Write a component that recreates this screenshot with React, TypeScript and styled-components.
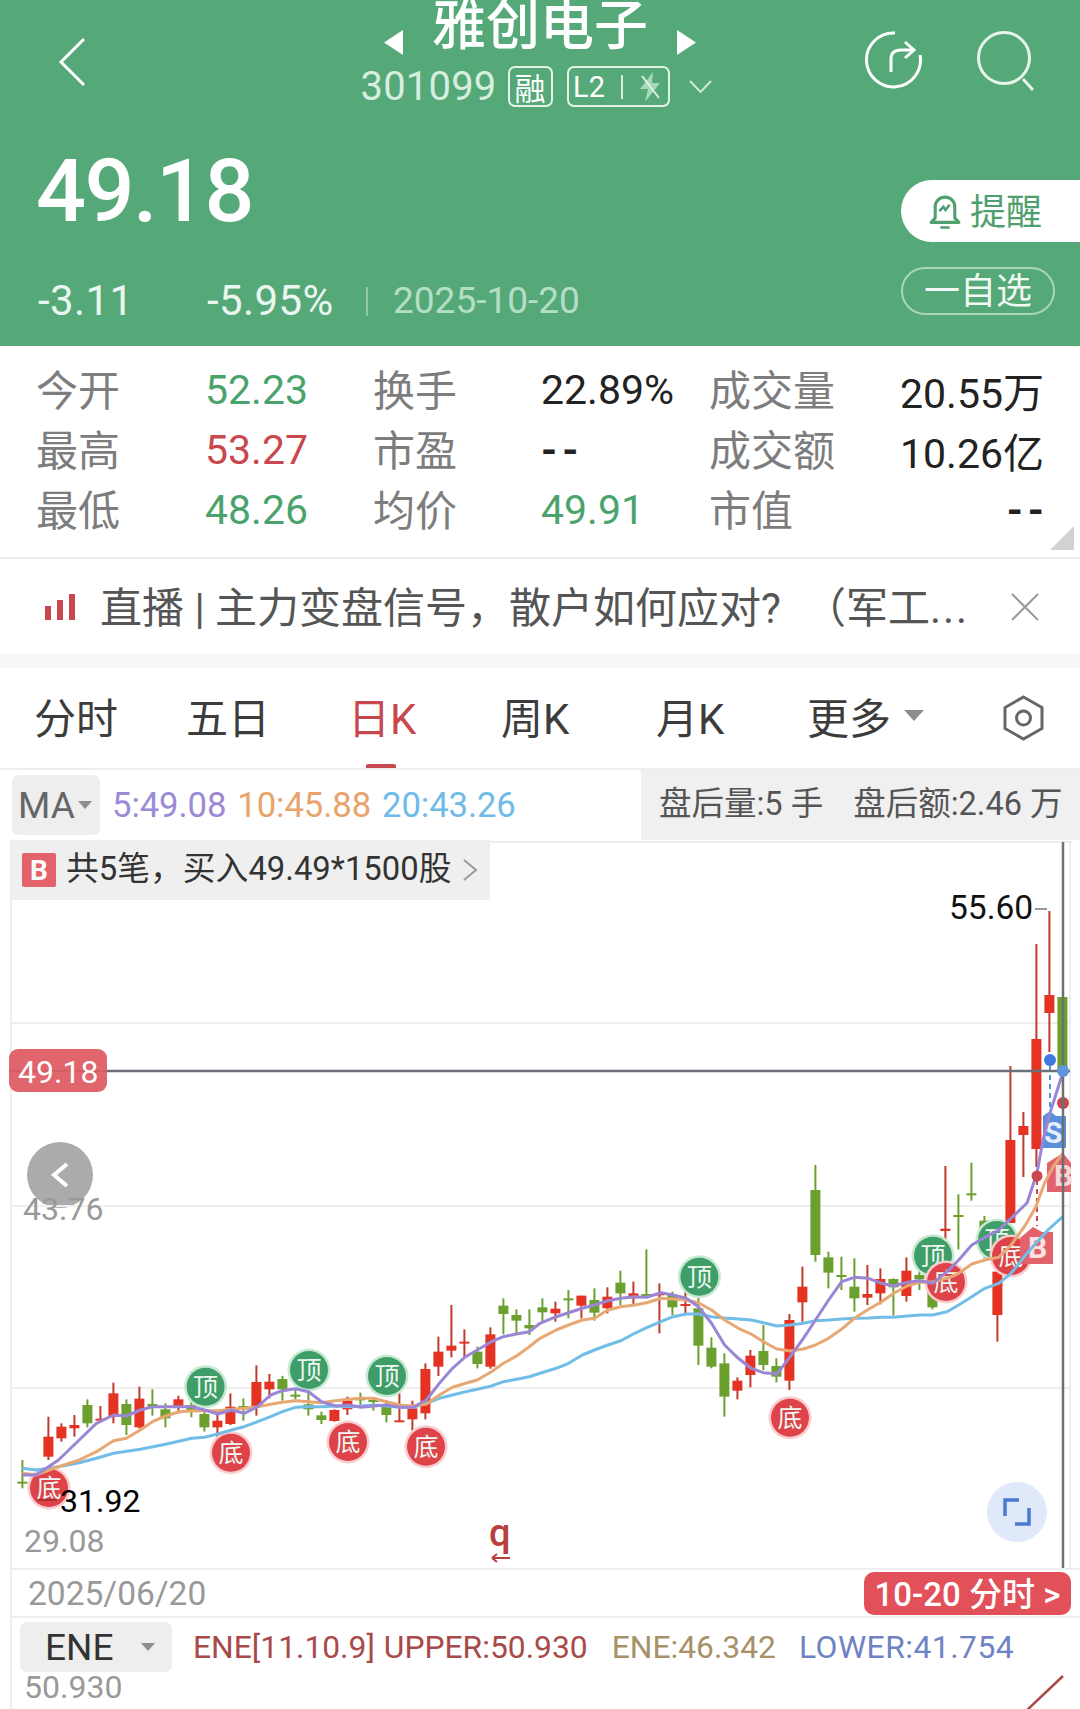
import { Fragment } from "react";
import styled, { createGlobalStyle } from "styled-components";

const GlobalStyle = createGlobalStyle`
  html, body {
    margin: 0;
    padding: 0;
    background: #fff;
  }
  body {
    font-family: Roboto, "Noto Sans CJK SC", sans-serif;
  }
`;

const Page = styled.div`
  width: 1080px;
  height: 1709px;
  overflow: hidden;
  background: #fff;
`;

// ---------- header ----------
const Header = styled.header`
  height: 346px;
  background: #55a877;
  color: #fff;
`;

const TopBar = styled.div`
  height: 113px;
  display: grid;
  grid-template-columns: 1fr auto 1fr;
`;

const BackLink = styled.div`
  padding: 37px 0 0 58px;
`;

const TitleBlock = styled.div`
  display: flex;
  flex-direction: column;
  align-items: center;
  padding-top: 1px;
`;

const NameRow = styled.div`
  display: flex;
  align-items: center;
  gap: 29px;
  height: 52px;
`;

const StockName = styled.div`
  font-size: 54px;
  line-height: 52px;
  font-weight: 500;
`;

const Caret = styled.svg`
  margin-top: 30px;
`;

const CodeRow = styled.div`
  display: flex;
  align-items: center;
  height: 41px;
  margin-top: 13px;
  padding-right: 8px;
`;

const Code = styled.div`
  font-size: 40px;
  line-height: 41px;
  letter-spacing: 0.2px;
  color: #d6eedf;
  margin-right: 11px;
`;

const Tag = styled.div<{ $width: number }>`
  box-sizing: border-box;
  width: ${({ $width }) => $width}px;
  height: 41px;
  border: 2px solid #e3f3e9;
  border-radius: 7px;
  display: flex;
  align-items: center;
  justify-content: center;
  font-size: 31px;
  margin-right: 14px;
`;

const L2Text = styled.span`
  font-size: 29px;
  margin-right: 16px;
`;

const TagDivider = styled.span`
  width: 2px;
  height: 24px;
  background: #d7eee0;
  margin-right: 14px;
`;

const CodeChevron = styled.svg`
  margin-left: 5px;
`;

const RightIcons = styled.div`
  display: flex;
  justify-content: flex-end;
  gap: 55px;
  padding: 31px 45px 0 0;
`;

const Quote = styled.div`
  display: flex;
  justify-content: space-between;
`;

const QuoteLeft = styled.div`
  padding-left: 38px;
`;

const BigPrice = styled.div`
  margin: 45px 0 0 -2px;
  font-size: 88px;
  line-height: 66px;
  letter-spacing: -1.5px;
  font-weight: 500;
`;

const ChangeRow = styled.div`
  display: flex;
  align-items: center;
  margin-top: 62px;
  height: 30px;
  font-size: 42px;
  line-height: 30px;
  color: #eaf6ef;
`;

const ChangeValue = styled.span<{ $width: number }>`
  width: ${({ $width }) => $width}px;
  letter-spacing: 0.4px;
`;

const ChangeDivider = styled.span`
  width: 2px;
  height: 29px;
  background: #8ec9a6;
  margin: 0 25px 0 0;
`;

const QuoteDate = styled.span`
  font-size: 37px;
  color: #b5dec6;
`;

const QuoteRight = styled.div`
  width: 179px;
  padding-top: 67px;
  display: flex;
  flex-direction: column;
  gap: 25px;
`;

const RemindButton = styled.div`
  height: 62px;
  background: #fff;
  border-radius: 31px 0 0 31px;
  display: flex;
  align-items: center;
  padding-left: 27px;
  gap: 8px;
  font-size: 36px;
  color: #4f9f6f;
`;

const RemindLabel = styled.span`
  padding-bottom: 4px;
`;

const WatchButton = styled.div`
  box-sizing: border-box;
  width: 154px;
  height: 48px;
  border: 2px solid #a9d5ba;
  border-radius: 24px;
  padding-bottom: 6px;
  display: flex;
  align-items: center;
  justify-content: center;
  font-size: 36px;
  color: #f1f9f4;
`;

// ---------- stats ----------
const Stats = styled.section`
  position: relative;
  box-sizing: border-box;
  height: 213px;
  padding: 14px 36px 0 36px;
  border-bottom: 2px solid #ededed;
  display: grid;
  grid-template-columns: 169px 168px 168px 168px 121px 1fr;
  grid-auto-rows: 60px;
  align-items: center;
  font-size: 41px;
`;

const StatLabel = styled.div`
  color: #7d7d7d;
  font-size: 42px;
  padding-bottom: 5px;
  white-space: nowrap;
`;

const StatValue = styled.div<{ $tone?: string; $right?: boolean }>`
  color: ${({ $tone }) => $tone ?? "#222"};
  text-align: ${({ $right }) => ($right ? "right" : "left")};
  white-space: nowrap;
`;

const StatDash = styled.span`
  font-weight: 700;
  letter-spacing: 5px;
  margin-right: -5px;
`;

const CornerMark = styled.div`
  position: absolute;
  right: 6px;
  bottom: 7px;
  width: 0;
  height: 0;
  border-left: 24px solid transparent;
  border-bottom: 24px solid #d2d2d2;
`;

// ---------- news ----------
const News = styled.div`
  height: 95px;
  display: flex;
  align-items: center;
  padding: 0 41px 0 45px;
  gap: 24px;
`;

const NewsText = styled.div`
  flex: 1;
  font-size: 42px;
  padding-bottom: 4px;
  color: #555;
  white-space: nowrap;
`;

const NewsTail = styled.span`
  margin-left: 23px;
`;

const NewsDots = styled.span`
  letter-spacing: 2px;
`;

const Band = styled.div`
  height: 14px;
  background: #f7f7f7;
`;

// ---------- tabs ----------
const Tabs = styled.nav`
  box-sizing: border-box;
  height: 102px;
  padding-left: 34px;
  border-bottom: 2px solid #eee;
  display: grid;
  grid-template-columns: 152px 162px 153px 155px 151px 195px 1fr;
  align-items: center;
`;

const Tab = styled.div<{ $active?: boolean }>`
  position: relative;
  box-sizing: border-box;
  height: 100px;
  padding-bottom: 6px;
  display: flex;
  align-items: center;
  gap: 13px;
  font-size: 42px;
  color: ${({ $active }) => ($active ? "#c9474e" : "#3c3c3c")};

  ${({ $active }) =>
    $active &&
    `&::after {
      content: "";
      position: absolute;
      left: 18px;
      bottom: 0;
      width: 30px;
      height: 4px;
      background: #c9474e;
      border-radius: 2px 2px 0 0;
    }`}
`;

const DownTriangle = styled.span<{ $size: number; $tone: string }>`
  display: inline-block;
  width: 0;
  height: 0;
  border-left: ${({ $size }) => $size}px solid transparent;
  border-right: ${({ $size }) => $size}px solid transparent;
  border-top: ${({ $size }) => $size * 1.15}px solid ${({ $tone }) => $tone};
`;

const SettingsIcon = styled.svg`
  margin-top: 6px;
`;

// ---------- MA row ----------
const MaRow = styled.div`
  height: 70px;
  display: flex;
  align-items: center;
  padding-left: 12px;
`;

const SelectBox = styled.div<{ $width: number; $height: number }>`
  box-sizing: border-box;
  width: ${({ $width }) => $width}px;
  height: ${({ $height }) => $height}px;
  background: #eee;
  border-radius: 7px;
  display: flex;
  align-items: center;
`;

const MaName = styled.span`
  font-size: 37px;
  color: #666;
  margin: 0 3px 0 6px;
`;

const MaValues = styled.div`
  display: flex;
  gap: 11px;
  margin-left: 12px;
  font-size: 34.7px;
  letter-spacing: -0.1px;
`;

const MaValue = styled.span<{ $tone: string }>`
  color: ${({ $tone }) => $tone};
`;

const AfterHours = styled.div`
  margin-left: auto;
  box-sizing: border-box;
  width: 439px;
  height: 70px;
  padding: 0 0 9px 18px;
  background: #f0f0f0;
  display: flex;
  align-items: center;
  gap: 30px;
  font-size: 32.5px;
  color: #555;
`;

// ---------- chart ----------
const Chart = styled.section`
  position: relative;
  height: 728px;
`;

const ChartCanvas = styled.svg`
  position: absolute;
  left: 0;
  top: 0;
  display: block;
`;

const TradeBar = styled.div`
  position: absolute;
  left: 10px;
  top: 0;
  box-sizing: border-box;
  width: 480px;
  height: 60px;
  background: #efefef;
  display: flex;
  align-items: center;
  padding-left: 12px;
  font-size: 32.8px;
  color: #333;
`;

const TradeBadge = styled.span`
  width: 34px;
  height: 34px;
  margin-right: 10px;
  background: #e4636a;
  border-radius: 2px;
  color: #fff;
  font-size: 28px;
  font-weight: 700;
  display: flex;
  align-items: center;
  justify-content: center;
`;

const TradeText = styled.span`
  padding-bottom: 9px;
  margin-right: 11px;
`;

const BackBubble = styled.div`
  position: absolute;
  left: 27px;
  top: 302px;
  width: 66px;
  height: 66px;
  border-radius: 50%;
  background: #ababab;
  display: flex;
  align-items: center;
  justify-content: center;
`;

const RestoreBubble = styled.div`
  position: absolute;
  left: 987px;
  top: 642px;
  width: 60px;
  height: 60px;
  border-radius: 50%;
  background: #dfe9f9;
  display: flex;
  align-items: center;
  justify-content: center;
`;

const ChartText = styled.text<{ $size: number; $tone: string; $weight?: number }>`
  font-family: Roboto, "Noto Sans CJK SC", sans-serif;
  font-size: ${({ $size }) => $size}px;
  fill: ${({ $tone }) => $tone};
  font-weight: ${({ $weight }) => $weight ?? 400};
`;

// ---------- bottom ----------
const DateRow = styled.div`
  box-sizing: border-box;
  height: 50px;
  margin-left: 10px;
  padding: 0 9px 0 16px;
  border-top: 2px solid #eee;
  border-left: 2px solid #eee;
  border-bottom: 2px solid #eee;
  display: flex;
  align-items: center;
  justify-content: space-between;
  font-size: 33.5px;
  color: #999;
`;

const MinutePill = styled.div`
  box-sizing: border-box;
  width: 207px;
  height: 43px;
  padding-bottom: 3px;
  border-radius: 10px;
  background: #e25059;
  color: #fff;
  display: flex;
  align-items: center;
  justify-content: center;
  font-size: 33px;
  font-weight: 500;
  white-space: pre;
`;

const IndicatorRow = styled.div`
  height: 91px;
  margin-left: 10px;
  padding: 4px 0 0 8px;
  border-left: 2px solid #eee;
  position: relative;
`;

const IndicatorTop = styled.div`
  display: flex;
  align-items: center;
`;

const EneName = styled.span`
  font-size: 37px;
  color: #333;
  margin: 0 28px 0 25px;
`;

const EneValues = styled.div`
  display: flex;
  margin-left: 21px;
  font-size: 31.8px;
  white-space: nowrap;
`;

const EneValue = styled.span<{ $tone: string; $gap: number; $spacing?: number }>`
  color: ${({ $tone }) => $tone};
  margin-right: ${({ $gap }) => $gap}px;
  letter-spacing: ${({ $spacing }) => $spacing ?? 0}px;
`;

const AxisValue = styled.div`
  margin: 2px 0 0 4px;
  font-size: 32px;
  line-height: 27px;
  color: #999;
`;

const CornerLine = styled.svg`
  position: absolute;
  right: 16px;
  bottom: 0;
`;

// ---------- chart data ----------
type Candle = [number, number, number, number, "r" | "g"];

// high, body top, body bottom, low
const candles: Candle[] = [
  [930, 995, 997, 1015, "g"], [970, 985, 1040, 1055, "r"], [800, 860, 920, 930, "r"], [820, 830, 865, 875, "r"],
  [795, 825, 835, 860, "r"], [748, 765, 820, 832, "g"], [768, 806, 810, 815, "r"], [698, 730, 800, 820, "r"],
  [748, 762, 825, 855, "g"], [710, 746, 832, 835, "r"], [718, 762, 765, 797, "g"], [760, 778, 805, 832, "g"],
  [737, 748, 770, 790, "r"], [755, 765, 780, 802, "g"], [785, 792, 832, 845, "g"], [780, 812, 832, 865, "r"],
  [730, 770, 822, 825, "r"], [745, 768, 778, 812, "g"], [646, 696, 770, 797, "r"], [672, 695, 718, 745, "r"],
  [678, 687, 718, 752, "g"], [715, 734, 737, 748, "g"], [720, 763, 778, 797, "g"], [785, 796, 810, 822, "g"],
  [778, 780, 813, 815, "r"], [740, 752, 778, 795, "r"], [728, 745, 750, 770, "g"], [742, 750, 753, 782, "g"],
  [750, 770, 795, 817, "g"], [730, 811, 814, 815, "r"], [752, 775, 808, 842, "r"], [640, 657, 790, 808, "r"],
  [560, 605, 650, 678, "r"], [465, 587, 602, 622, "r"], [538, 575, 579, 622, "r"], [590, 605, 642, 655, "g"],
  [532, 553, 650, 656, "r"], [445, 467, 492, 553, "g"], [478, 495, 512, 552, "g"], [478, 525, 535, 555, "g"],
  [445, 472, 487, 515, "g"], [455, 476, 490, 515, "r"], [420, 445, 448, 505, "g"], [437, 437, 467, 505, "r"],
  [415, 450, 488, 512, "g"], [412, 440, 475, 490, "r"], [362, 398, 430, 465, "g"], [395, 430, 445, 468, "r"],
  [298, 432, 437, 440, "g"], [400, 430, 432, 550, "r"], [425, 435, 472, 495, "g"], [420, 462, 466, 490, "r"],
  [440, 475, 587, 645, "g"], [562, 593, 650, 655, "g"], [610, 640, 740, 800, "g"], [682, 692, 722, 748, "r"],
  [600, 617, 675, 712, "r"], [525, 603, 645, 660, "g"], [625, 648, 680, 697, "g"], [492, 510, 692, 720, "r"],
  [350, 410, 457, 515, "r"], [45, 120, 315, 335, "g"], [305, 322, 368, 415, "g"], [320, 375, 381, 420, "g"],
  [325, 410, 445, 485, "g"], [345, 432, 443, 465, "r"], [355, 387, 430, 463, "r"], [385, 387, 412, 497, "g"],
  [322, 362, 438, 455, "r"], [330, 375, 388, 420, "g"], [390, 425, 472, 478, "g"], [48, 236, 243, 340, "r"],
  [133, 195, 200, 298, "g"], [38, 130, 133, 152, "g"], [198, 212, 300, 325, "g"], [340, 365, 495, 575, "r"],
  [-252, -30, 219, 219, "r"], [-114, -72, -45, 81, "r"], [-618, -333, -3, 51, "r"], [-717, -465, -411, -294, "r"],
  [-459, -459, -240, -240, "g"],
];

const toY = (v: number) => 1150 + v / 3;
const candleX = (i: number) => 22.4 + 13 * i;

// measured as x,y pairs: left half of the chart, then right half
const toLine = (left: number[], right: number[], tail = "") => {
  const pts: string[] = [];
  for (let i = 0; i < left.length; i += 2) pts.push(`${(left[i] / 2.904).toFixed(1)},${toY(left[i + 1]).toFixed(1)}`);
  for (let i = 0; i < right.length; i += 2) pts.push(`${(540 + right[i] / 2.904).toFixed(1)},${toY(right[i + 1]).toFixed(1)}`);
  return pts.join(" ") + tail;
};

const ma5 = toLine(
  [65,975,105,975,170,930,230,870,280,820,330,795,367,798,407,780,443,770,481,770,520,770,557,770,594,780,633,792,672,780,709,790,748,770,786,735,820,722,858,716,896,725,934,755,974,768,1012,765,1048,772,1085,768,1122,765,1162,772,1200,772,1238,750,1276,700,1314,655,1352,620,1386,600,1427,575,1462,560,1500,552,1537,545],
  [0,520,47,500,83,488,123,475,158,465,197,452,235,445,275,440,310,442,351,428,386,435,425,445,460,470,498,520,536,585,576,625,613,655,649,668,688,672,727,620,765,565,800,510,838,450,876,395,913,382,954,385,992,400,1027,408,1067,397,1103,392,1140,400,1182,365,1216,330,1254,285,1292,262,1332,240,1368,205],
  " 1027,1203 1037,1173 1043,1140 1050,1113 1063,1072"
);

const ma10 = toLine(
  [65,970,105,975,170,950,230,930,280,905,330,872,367,865,407,840,443,815,481,798,520,785,557,783,594,782,633,782,672,778,709,775,748,770,786,763,820,757,858,752,896,755,934,758,974,752,1012,748,1048,745,1085,745,1122,755,1162,765,1200,768,1238,762,1276,735,1314,712,1352,700,1386,690,1427,665,1462,640,1500,618,1537,590],
  [0,565,47,540,83,525,123,510,158,505,197,480,235,470,275,465,310,458,351,445,386,447,425,450,460,458,498,480,536,510,576,535,613,552,649,575,688,597,727,603,765,597,800,585,838,565,876,537,913,505,954,478,992,455,1027,430,1067,407,1103,397,1140,395,1182,385,1216,370,1254,342,1292,330,1332,322,1368,285,1410,225,1440,170,1465,100,1490,50,1518,10]
);

const ma20 = toLine(
  [65,955,105,960,170,950,230,938,280,925,330,910,407,898,481,883,557,865,594,862,633,852,672,840,709,830,748,815,786,800,820,785,858,772,896,770,934,770,974,768,1012,770,1048,768,1085,765,1122,768,1162,772,1200,772,1238,760,1276,745,1314,735,1352,725,1386,718,1427,708,1462,695,1500,688,1537,680],
  [0,670,47,655,83,640,123,615,158,600,197,585,235,572,275,550,310,533,351,515,386,500,425,492,460,492,498,500,536,504,576,507,613,510,649,518,688,528,727,525,765,520,800,512,838,510,876,507,913,505,954,504,992,502,1027,502,1067,498,1103,495,1140,495,1182,485,1216,465,1254,440,1292,415,1332,400,1368,370,1410,315,1440,280,1475,240,1518,200]
);

const markers: { x: number; y: number; kind: "top" | "bottom" }[] = [
  { x: 205.6, y: 1386.7, kind: "top" },
  { x: 309, y: 1370, kind: "top" },
  { x: 387, y: 1376, kind: "top" },
  { x: 699.4, y: 1276.7, kind: "top" },
  { x: 933, y: 1255.7, kind: "top" },
  { x: 997, y: 1240, kind: "top" },
  { x: 231, y: 1452.7, kind: "bottom" },
  { x: 348, y: 1442, kind: "bottom" },
  { x: 426, y: 1446.7, kind: "bottom" },
  { x: 49, y: 1488, kind: "bottom" },
  { x: 790, y: 1417.7, kind: "bottom" },
  { x: 946, y: 1282, kind: "bottom" },
  { x: 1011, y: 1256, kind: "bottom" },
];

const CandleChart = () => (
  <ChartCanvas width={1080} height={728} viewBox="0 840 1080 728">
    <line x1={11} y1={840} x2={11} y2={1568} stroke="#eee" strokeWidth={2} />
    <line x1={12} y1={842} x2={1072} y2={842} stroke="#eee" strokeWidth={2} />
    <line x1={1070} y1={842} x2={1070} y2={1568} stroke="#eee" strokeWidth={2} />
    {[1023, 1206, 1388].map((y) => (
      <line key={y} x1={12} y1={y} x2={1070} y2={y} stroke="#eee" strokeWidth={2} />
    ))}

    {candles.map(([hi, top, bot, lo, c], i) => {
      const x = candleX(i);
      const body = c === "r" ? "#e53323" : "#6ba02f";
      const wick = c === "r" ? "#c0392b" : "#6ba02f";
      const h = Math.max(toY(bot) - toY(top), 2);
      return (
        <g key={i}>
          <line x1={x} y1={toY(hi)} x2={x} y2={toY(lo)} stroke={wick} strokeWidth={2} />
          <rect x={x - 5} y={toY(top)} width={10} height={h} fill={body} />
        </g>
      );
    })}

    {markers.map((m) => (
      <g key={`${m.x}-${m.y}`}>
        <circle cx={m.x} cy={m.y} r={21.5} fill={m.kind === "top" ? "#c6e9d2" : "#f9cdcf"} />
        <circle cx={m.x} cy={m.y} r={19} fill={m.kind === "top" ? "#3f9e68" : "#dd4349"} />
        <ChartText x={m.x} y={m.y + 9} textAnchor="middle" $size={25} $tone="#eef8f2">
          {m.kind === "top" ? "顶" : "底"}
        </ChartText>
      </g>
    ))}

    <polygon points="1047,1163 1063,1153 1071,1163 1071,1192 1047,1192" fill="#e2636b" />
    <ChartText x={1054} y={1186} $size={30} $weight={700} $tone="#f7d6d8">B</ChartText>
    <polygon points="1020,1238 1033,1227 1042,1232 1053,1232 1053,1264 1020,1264" fill="#e2636b" />
    <ChartText x={1028} y={1258} $size={30} $weight={700} $tone="#fbe3e4">B</ChartText>
    <polygon points="1043,1116 1050,1111 1056,1116 1066,1116 1066,1148 1043,1148" fill="#5b8fdc" />
    <ChartText x={1044} y={1143} $size={30} $weight={700} $tone="#e6eefb">S</ChartText>

    <line x1={1050} y1={1066} x2={1050} y2={1112} stroke="#5b8fdc" strokeWidth={2} strokeDasharray="5 4" />
    <line x1={1037} y1={1180} x2={1037} y2={1226} stroke="#c9474e" strokeWidth={2} strokeDasharray="5 4" />
    <line x1={1063} y1={1108} x2={1063} y2={1152} stroke="#c9474e" strokeWidth={2} strokeDasharray="5 4" />

    <polyline points={ma20} fill="none" stroke="#72bde8" strokeWidth={3} strokeLinejoin="round" />
    <polyline points={ma10} fill="none" stroke="#e8a873" strokeWidth={3} strokeLinejoin="round" />
    <polyline points={ma5} fill="none" stroke="#9b86d6" strokeWidth={3} strokeLinejoin="round" />

    <circle cx={1050} cy={1060} r={6} fill="#3f78e0" />
    <circle cx={1063} cy={1103} r={6} fill="#c9474e" />
    <circle cx={1037} cy={1176} r={5.5} fill="#c9474e" />

    <line x1={1063} y1={842} x2={1063} y2={1568} stroke="#6a7075" strokeWidth={2.5} />
    <line x1={12} y1={1071} x2={1070} y2={1071} stroke="#6a7075" strokeWidth={2.5} />
    <circle cx={1063} cy={1071} r={6} fill="#5e96dc" />

    <rect x={9} y={1049} width={98} height={43} rx={9} fill="#e0656d" />
    <line x1={9} y1={1071} x2={107} y2={1071} stroke="#b5484f" strokeWidth={1} opacity={0.5} />
    <ChartText x={18} y={1083} $size={32} $tone="#fff">49.18</ChartText>

    <ChartText x={949} y={919} $size={33.5} $tone="#111">55.60</ChartText>
    <line x1={1035} y1={909} x2={1047} y2={909} stroke="#999" strokeWidth={2} />

    <ChartText x={23} y={1220} $size={32} $tone="#999">43.76</ChartText>
    <line x1={38} y1={1500} x2={57} y2={1500} stroke="#a33" strokeWidth={2} />
    <ChartText x={60} y={1512} $size={32} $tone="#000">31.92</ChartText>
    <ChartText x={24} y={1552} $size={32} $tone="#999">29.08</ChartText>

    <ChartText x={489} y={1546} $size={38} $weight={500} $tone="#b8403c">q</ChartText>
    <path d="M492 1558h18M492 1558l5-4M492 1558l5 4" fill="none" stroke="#b8403c" strokeWidth={2} />
  </ChartCanvas>
);

const DASH = "--";

const stats = [
  { label: "今开", value: "52.23", tone: "#4aa36c", label2: "换手", value2: "22.89%", tone2: "#222", label3: "成交量", value3: "20.55万" },
  { label: "最高", value: "53.27", tone: "#c9474e", label2: "市盈", value2: DASH, tone2: "#222", label3: "成交额", value3: "10.26亿" },
  { label: "最低", value: "48.26", tone: "#4aa36c", label2: "均价", value2: "49.91", tone2: "#4aa36c", label3: "市值", value3: DASH },
];

const statText = (text: string) => (text === DASH ? <StatDash>{text}</StatDash> : text);

export default function App() {
  return (
    <Page>
      <GlobalStyle />
      <Header>
        <TopBar>
          <BackLink>
            <svg width={28} height={50} viewBox="0 0 28 50">
              <path d="M26 2 3 25l23 23" fill="none" stroke="#fff" strokeWidth={3} />
            </svg>
          </BackLink>
          <TitleBlock>
            <NameRow>
              <Caret width={19} height={25} viewBox="0 0 19 25">
                <path d="M19 0v25L0 12.5z" fill="#fff" />
              </Caret>
              <StockName>雅创电子</StockName>
              <Caret width={19} height={25} viewBox="0 0 19 25">
                <path d="M0 0v25l19-12.5z" fill="#fff" />
              </Caret>
            </NameRow>
            <CodeRow>
              <Code>301099</Code>
              <Tag $width={45}>融</Tag>
              <Tag $width={103}>
                <L2Text>L2</L2Text>
                <TagDivider />
                <svg width={26} height={30} viewBox="0 0 26 30">
                  <path d="M16 0 3 17h8L8 30l15-19h-8z" fill="#a8d8b8" />
                  <path d="M5 4l17 22" stroke="#dff1e6" strokeWidth={2} />
                </svg>
              </Tag>
              <CodeChevron width={23} height={13} viewBox="0 0 23 13">
                <path d="M1 1l10.5 11L22 1" fill="none" stroke="#cde8d7" strokeWidth={2} />
              </CodeChevron>
            </CodeRow>
          </TitleBlock>
          <RightIcons>
            <svg width={58} height={58} viewBox="0 0 58 58">
              <path d="M31 2a27 27 0 1 0 25 22" fill="none" stroke="#fff" strokeWidth={3} />
              <path d="M27 41V28q0-9 10-9h13M41 11l9 8-9 8" fill="none" stroke="#fff" strokeWidth={3} />
            </svg>
            <svg width={58} height={60} viewBox="0 0 58 60">
              <circle cx={27} cy={27} r={25.5} fill="none" stroke="#e7f5ec" strokeWidth={3} />
              <path d="M46 48l10 11" stroke="#e7f5ec" strokeWidth={3} />
            </svg>
          </RightIcons>
        </TopBar>
        <Quote>
          <QuoteLeft>
            <BigPrice>49.18</BigPrice>
            <ChangeRow>
              <ChangeValue $width={169}>-3.11</ChangeValue>
              <ChangeValue $width={159}>-5.95%</ChangeValue>
              <ChangeDivider />
              <QuoteDate>2025-10-20</QuoteDate>
            </ChangeRow>
          </QuoteLeft>
          <QuoteRight>
            <RemindButton>
              <svg width={34} height={36} viewBox="0 0 33 34">
                <path d="M7 24V13a9.5 9.5 0 0 1 19 0v11l4 4H3z" fill="none" stroke="#4f9f6f" strokeWidth={3} strokeLinejoin="round" />
                <path d="M12 33h9M11 17l4-4 2 3 4-5" fill="none" stroke="#4f9f6f" strokeWidth={2.5} />
              </svg>
              <RemindLabel>提醒</RemindLabel>
            </RemindButton>
            <WatchButton>一自选</WatchButton>
          </QuoteRight>
        </Quote>
      </Header>

      <Stats>
        {stats.map((row) => (
          <Fragment key={row.label}>
            <StatLabel>{row.label}</StatLabel>
            <StatValue $tone={row.tone}>{row.value}</StatValue>
            <StatLabel>{row.label2}</StatLabel>
            <StatValue $tone={row.tone2}>{statText(row.value2)}</StatValue>
            <StatLabel>{row.label3}</StatLabel>
            <StatValue $right>{statText(row.value3)}</StatValue>
          </Fragment>
        ))}
        <CornerMark />
      </Stats>

      <News>
        <svg width={31} height={26} viewBox="0 0 31 26">
          <path d="M0 12h6v14H0zM12 6h6v20h-6z" fill="#c9474e" />
          <path d="M24 0h6v26h-6z" fill="#c9474e" />
        </svg>
        <NewsText>
          直播 | 主力变盘信号，散户如何应对?
          <NewsTail>
            （军工<NewsDots>...</NewsDots>
          </NewsTail>
        </NewsText>
        <svg width={28} height={28} viewBox="0 0 28 28">
          <path d="M1 1l26 26M27 1 1 27" stroke="#9a9a9a" strokeWidth={2} />
        </svg>
      </News>
      <Band />

      <Tabs>
        <Tab>分时</Tab>
        <Tab>五日</Tab>
        <Tab $active>日K</Tab>
        <Tab>周K</Tab>
        <Tab>月K</Tab>
        <Tab>
          更多
          <DownTriangle $size={10} $tone="#8d8d8d" />
        </Tab>
        <Tab>
          <SettingsIcon width={43} height={46} viewBox="0 0 43 46">
            <path d="M21.5 2 40 12.5v21L21.5 44 3 33.5v-21z" fill="none" stroke="#666" strokeWidth={3} />
            <circle cx={21.5} cy={23} r={7} fill="none" stroke="#666" strokeWidth={3} />
          </SettingsIcon>
        </Tab>
      </Tabs>

      <MaRow>
        <SelectBox $width={88} $height={60}>
          <MaName>MA</MaName>
          <DownTriangle $size={7} $tone="#8d8d8d" />
        </SelectBox>
        <MaValues>
          <MaValue $tone="#9b8bd6">5:49.08</MaValue>
          <MaValue $tone="#e8a46c">10:45.88</MaValue>
          <MaValue $tone="#70bbe8">20:43.26</MaValue>
        </MaValues>
        <AfterHours>
          <span>盘后量:5 手</span>
          <span>盘后额:2.46 万</span>
        </AfterHours>
      </MaRow>

      <Chart>
        <BackBubble>
          <svg width={20} height={28} viewBox="0 0 20 28">
            <path d="M17 3 4 14l13 11" fill="none" stroke="#fff" strokeWidth={4} />
          </svg>
        </BackBubble>
        <CandleChart />
        <TradeBar>
          <TradeBadge>B</TradeBadge>
          <TradeText>共5笔，买入49.49*1500股</TradeText>
          <svg width={16} height={24} viewBox="0 0 16 24">
            <path d="M2 2l12 10L2 22" fill="none" stroke="#999" strokeWidth={2} />
          </svg>
        </TradeBar>
        <RestoreBubble>
          <svg width={28} height={28} viewBox="0 0 28 28">
            <path d="M16 2H2v16M12 26h14V10" fill="none" stroke="#4a7bd0" strokeWidth={3.5} />
          </svg>
        </RestoreBubble>
      </Chart>

      <DateRow>
        2025/06/20
        <MinutePill>10-20 分时 &gt;</MinutePill>
      </DateRow>

      <IndicatorRow>
        <IndicatorTop>
          <SelectBox $width={152} $height={50}>
            <EneName>ENE</EneName>
            <DownTriangle $size={7} $tone="#8d8d8d" />
          </SelectBox>
          <EneValues>
            <EneValue $tone="#a94a4a" $gap={9}>ENE[11.10.9]</EneValue>
            <EneValue $tone="#a94a4a" $gap={24}>UPPER:50.930</EneValue>
            <EneValue $tone="#a89068" $gap={23}>ENE:46.342</EneValue>
            <EneValue $tone="#6f83c4" $gap={0} $spacing={0.5}>LOWER:41.754</EneValue>
          </EneValues>
        </IndicatorTop>
        <AxisValue>50.930</AxisValue>
        <CornerLine width={40} height={38} viewBox="0 0 40 38">
          <path d="M1 37 39 1" fill="none" stroke="#a94a4a" strokeWidth={2.5} />
        </CornerLine>
      </IndicatorRow>
    </Page>
  );
}
